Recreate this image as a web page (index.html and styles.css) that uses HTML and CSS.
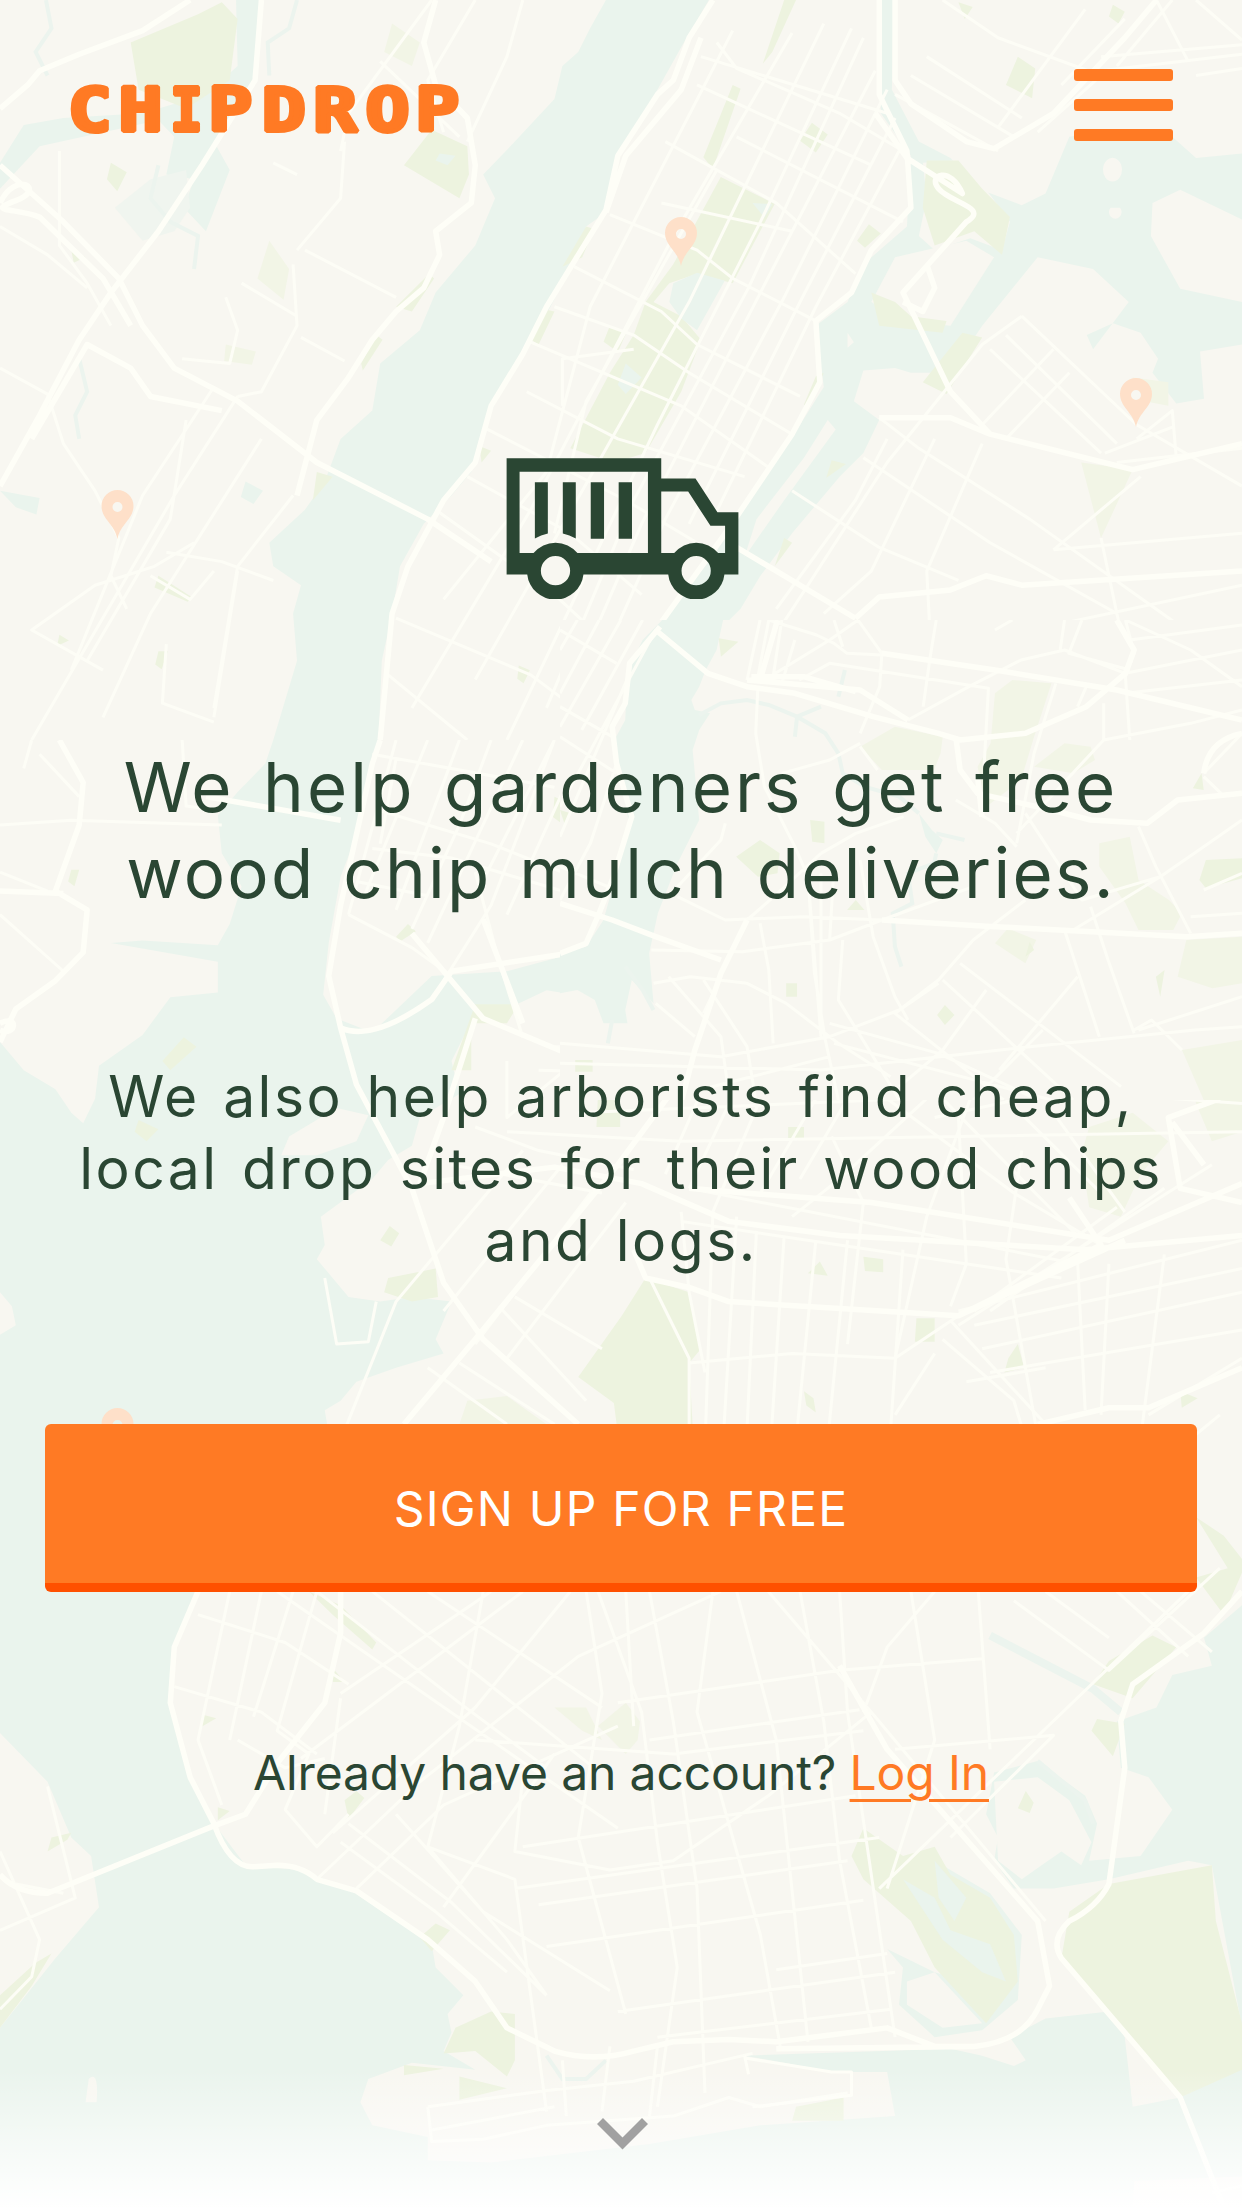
FILE: index.html
```html
<!DOCTYPE html>
<html lang="en">
<head>
<meta charset="utf-8">
<title>ChipDrop</title>
<link rel="stylesheet" href="styles.css">
</head>
<body>
<main class="hero">
  <svg class="map" viewBox="0 0 1242 2208" aria-hidden="true">
    <defs>
      <path id="pin" d="M0 47C-3 32-16 27-16 14A16 16 0 0 1 16 14C16 27 3 32 0 47ZM0 10a5 5 0 1 0 0 10a5 5 0 0 0 0-10Z"/>
      <linearGradient id="fade" x1="0" y1="0" x2="0" y2="1"><stop offset="0" stop-color="#fff" stop-opacity="0"/><stop offset="1" stop-color="#fff"/></linearGradient>
    </defs>

    <!-- north -->
    <svg x="0" y="0" width="1242" height="740" viewBox="0 0 1568 1568" preserveAspectRatio="none">
      <g class="water">
        <path d="M765 0H895L860 100L830 190L780 340L765 450L740 480L720 570L695 650L670 720L640 800L605 930L595 1000L570 1050L535 1110L505 1200L495 1300L482 1400L478 1568H345L350 1540L375 1400L370 1300L380 1240L345 1200L340 1150L385 1080L410 1020L430 930L470 870L480 770L530 700L550 620L600 520L625 420L610 370L650 300L700 210L710 140L730 110L745 60Z"/>
        <path d="M1110 0H1128L1126 190L1160 300L1200 335L1235 400L1290 435L1320 410L1350 290L1400 275L1480 290L1510 335L1568 325V465L1490 402L1455 430L1453 500L1490 612L1568 640V730L1515 745L1520 845L1485 855L1455 790L1462 760L1440 705L1405 685L1372 710L1380 740L1425 640L1380 570L1310 545L1240 690L1200 790L1150 790L1130 780L1090 785L1078 850L1110 890L1090 960L1060 1010L1000 1130L960 1220L935 1290L905 1340L890 1410L905 1440L875 1505L895 1568H785L795 1430L830 1320L900 1180L970 1000L1010 900L1040 820L1030 690L1070 640L1090 560L1145 480L1150 330L1112 240Z"/>
        <path d="M298 0H328L322 170L270 300L290 360L260 490L232 440L245 380L210 370L220 290L200 255L50 310L0 400V345L30 265L80 250L180 240L260 200L300 140Z"/>
        <path d="M310 1020l22 20l-12 28l-16-15ZM0 1040l50 15l-4 35l-26-15Z"/>
      </g>
      <path class="marsh" d="M145 440L190 380L235 360L240 440L220 490L180 510Z"/>
      <g class="land">
        <path d="M1165 345L1205 340L1240 390L1275 470L1265 530L1225 505L1180 530L1160 500L1170 420Z"/>
        <path d="M1130 545L1220 510L1255 545L1200 690L1140 680L1100 640Z"/>
        <path d="M1045 890L1055 910L990 1060L940 1180L955 1100L1015 970ZM1397 340a12 25 0 1 0 15 0a12 25 0 0 0-15 0M1402 440a8 14 0 1 0 12 0ZM1070 705l8 20l-8 12Z"/>
      </g>
      <g class="park">
        <path d="M165 90L250 30L280 5L300 40L290 170L235 230L175 190Z"/>
        <path d="M910 375L978 432L925 600L880 580L845 600L825 640L860 670L885 720L860 830L815 960L775 980L720 950L770 790L800 710L815 640L850 560Z"/>
        <path d="M545 275L590 310L592 370L580 420L510 350ZM1170 340L1210 340L1240 400L1275 460L1265 540L1230 490L1180 520L1165 440ZM1100 620L1130 640L1150 670L1195 680L1190 705L1110 690ZM1215 705L1240 715L1195 835L1165 810ZM1285 120L1307 145L1303 208L1270 180ZM1025 260l20 25l-15 38l-20-25ZM925 180l10 8l-35 170l-12-25ZM990 0h15l-30 110l-12 25ZM1097 475l15 20l-20 30l-10-15ZM1405 10l15 15l-8 25l-12-15ZM1210 5l18 10l-10 25ZM140 345l20 20l-12 40l-13-25ZM200 1220l42 45l-5 10l-42-30ZM770 690l20 18l-10 38l-18-22ZM740 480l10 5l-15 60l-25 20ZM685 655l15 5l-20 70l-10-10ZM542 580l6 10l-28 70l-20-10ZM475 710l8 10l-25 65l-2-15ZM400 1000l20 10l-25 50ZM1040 790l-20 75l-5-8l15-60ZM1050 975l18 8l-25 30ZM75 1345l12 12l-15 12ZM200 1380h12l-8 38l-8-10ZM605 945l15 10l-12 25ZM990 1140l10 10l-22 50ZM90 530l18 15l-15 12ZM655 1410l14 10l-8 28l-8-10Z"/>
      </g>
      <path class="meadow" d="M495 50L530 90L520 140L485 110ZM340 510L365 570L358 635L325 590ZM1365 980L1430 995L1390 1140ZM1430 800l45 10v50l-30-10ZM285 730l38 15l-5 28l-35-8Z"/>
      <path class="water" d="M850 600L880 578L915 595L880 700L860 675L845 640ZM790 770L810 800L790 835L780 815ZM555 325l20 5l-10 20l-15-10ZM950 430l25 3l-10 28Z"/>
      <g class="creek"><path d="M58 0L65 60L45 110L60 160M375 0L365 60L338 90L340 160M200 350L190 420L215 470L250 500L245 570M100 760L110 830L95 880L100 930"/></g>
      <g class="road">
        <path d="M925 65L745 650L690 1000L560 1270M1000 70L850 500L670 1080L520 1500M1040 50L870 640L600 1440M1075 60L960 470L830 900L640 1568M1090 80L945 610L800 1060L690 1500M1105 150L960 620L810 1110L730 1420M1120 190L990 630L840 1100L760 1400M1130 250L1010 640L870 1110M1135 320L1030 650L900 1100M905 360L740 850L700 1130M800 740L710 760L710 860"/>
        <path d="M905 90L930 145L1060 240L1140 320M885 120L1120 240M880 180L1100 350M840 300L980 430L1080 580M835 430L1000 490M930 290L1140 470M770 455L880 530L925 590L1030 680M725 565L835 660L880 730L1010 840M700 650L800 710L870 790L1000 920M670 725L860 860L970 990M665 830L780 930L940 1010M610 905L790 1060L880 1150M590 1010L720 1130L810 1260M550 1080L700 1260L790 1400M500 1310L670 1430L780 1568M490 1430L590 1568"/>
        <path d="M385 530L500 630M305 600L375 670M380 715L435 765M345 345L375 370M480 130L580 290M370 560L375 690L330 830L300 840M435 300L430 420L375 530M600 0L540 170L560 280M545 0L440 240L430 320M660 0L640 120L590 300M300 840L220 1050L40 1568M270 820L180 1050L90 1420M235 890L215 1100L110 1400M330 930L190 1300L130 1520M370 1050L300 1200L270 1500M345 1230L280 1190L210 1170M245 1150L195 1200L120 1240L40 1335L130 1420M210 1365L205 1490L270 1530M270 1210L240 1270L190 1220M300 1210L270 1520M0 480L60 540L110 610M75 320L75 520L110 600L140 690M0 780L60 835L80 940L120 1040L150 1140L140 1220L160 1290M230 760L290 770L300 700L285 630"/>
        <path d="M1190 0L1260 80L1390 160L1310 280M1370 20L1260 270M1420 40L1340 180M1480 0L1410 140M1510 0L1568 85M1460 0L1500 130M1390 120L1568 95M1390 150L1568 115M1510 160L1568 145M1130 200L1260 320M1150 160L1280 290M1170 120L1290 250"/>
        <path d="M1290 670L1435 900L1568 1030M1270 710L1410 940M1250 740L1390 960M1290 670L1240 730L1120 980L1020 1240L950 1420M1330 740L1240 900M1350 790L1270 930M1435 930L1480 870L1485 970M1395 960L1480 905M1410 980L1568 950M1110 885L1160 950L1300 1100L1568 1420M1120 930L1080 1060L980 1290M1180 930L1100 1210L1040 1300M1240 940L1170 1210L1175 1370M1090 970L1250 1150L1410 1300L1430 1450M1330 1165L1440 1010M1330 1165L1568 1130M1000 1040L1110 1160L1210 1230M960 1320L1100 1390L1260 1350L1568 1240M1390 1140L1410 1300"/>
      </g>
      <g class="highway">
        <path d="M240 0L180 65L100 115L50 150L35 180L0 230M330 0L322 170L255 350L200 490L140 620L100 720L50 880L0 1030M0 350L80 470L150 590L180 690L220 780L300 850L400 980L540 1100L620 1190M0 430C20 360 60 400 20 425S20 440 50 460L130 590L165 690M550 0L535 90L550 180L590 250L600 350L595 430L550 490L555 540L535 610L500 660L470 720L440 800L400 890L375 1050M40 930L110 730L165 780L190 840L280 870"/>
        <path d="M900 0L870 80L850 170L830 200L780 330L765 445L730 540L690 650L660 750L620 860L600 980L560 1060L515 1200L495 1300L480 1568M885 80L860 190L790 330L765 450"/>
        <path d="M1110 0L1110 200L1145 320L1150 440L1100 530L1075 620L1030 680L1035 810L1000 920L920 1120L830 1330M1130 0L1130 170L1150 220L1220 300L1255 315L1330 240L1420 80L1460 0M1105 240L1145 335L1215 410C1200 350 1170 370 1185 400S1250 440 1220 470L1140 620L1200 830L1250 920L1430 995L1568 940M1170 560L1180 610L1165 660L1140 640M1110 885L1200 885L1250 920M930 1160L1080 1310M1568 1210L1290 1240L1245 1220L1200 1250L1110 1265L1080 1310"/>
      </g>
    </svg>

    <!-- harbour -->
    <svg x="0" y="740" width="1242" height="740" viewBox="0 0 1568 1568" preserveAspectRatio="none">
      <g class="water">
        <path d="M345 0H478L470 60L455 180L430 290L415 430L408 540L425 590L470 620L545 500L640 490L750 440L780 320L775 170L785 0H895L880 80L865 170L835 230L815 420L820 490L790 480L805 550L790 570L795 620L765 600L745 545L690 530L640 570L600 580L570 680L580 750L530 800L520 860L490 890L470 930L405 1010L410 1070L400 1100L440 1180L480 1190L520 1180L570 1190L550 1270L560 1300L500 1330L450 1360L430 1400L410 1420L415 1470L380 1568H0V1260L20 1240L15 1200L0 1170V640L30 700L70 740L90 790L105 812L120 760L125 690L180 625L215 545L275 535L275 470L140 430L180 425L275 435L290 390L305 310L280 240L275 160L300 110L335 50Z"/>
      </g>
      <path class="land" d="M425 780L465 795L450 850L400 880L355 880L365 840Z"/>
      <g class="park">
        <path d="M815 1140L870 1170L885 1290L870 1320L875 1470H780L775 1405L730 1350L785 1220ZM490 1140L550 1120L553 1180L520 1190L485 1170ZM232 630L248 650L215 700L205 680ZM175 805l25 20l-15 25l-15-20ZM600 560l55 0l-15 40l-45 0L595 700l-25 0ZM515 390l10 15l-20 22l-5-10ZM700 120l25 20l-15 38l-12-15ZM740 680h10v25l-24 0v-25ZM1090 1095l25 5v28l-23-3ZM1035 1105l10 30l-25-5ZM1285 1280l8 50l-25 10l5-30ZM1157 1225h23v50h-25ZM480 1060l12-30l12 15l-10 28ZM1015 1380l12 15l3 30l-12-15ZM1490 1380l22 15l-20 20ZM755 750l28 10v60l-30 0ZM995 820h20v25h-20ZM90 275h10l-6 35l-8-10Z"/>
      </g>
      <path class="meadow" d="M1375 820L1430 790L1475 850L1440 920L1415 1010L1375 990L1365 880ZM590 1400L640 1390L690 1450H580ZM1495 650L1568 640V830L1530 850L1510 770Z"/>
      <g class="road">
        <path d="M500 0L440 370M540 0L460 330M580 0L500 360M620 0L580 180L520 400M660 0L540 430M700 0L600 330M740 0L640 370M480 150L620 220L740 300M470 230L570 250L770 350M450 300L540 330M440 370L520 440L570 500M600 280L630 470L660 630M700 0L620 350L560 510M500 40L480 220M470 30L700 100"/>
        <path d="M700 650H860M640 680L640 800L720 690L725 650M680 700L900 710M710 750L1100 680M730 790L1568 730M640 830L860 850L1568 830M900 690L840 920M940 700L870 950M960 760L900 1000M1030 760L960 960M1070 760L1010 930M600 820L680 870L800 910M570 900L760 960M1400 750L1568 770M1170 760L1060 930L1000 1010M1290 760L1180 800M1270 760L1390 960M1330 790L1420 1000M1120 760L1280 960L1390 1070M1190 760L1360 1050M1225 760L1170 1010L1130 1310M1290 870L1270 1100L1320 1568M1210 800L1220 1110L1200 1200M1050 840L1090 980L1070 1280M1410 990L1230 1210M1470 950L1250 1210M1530 900L1210 1240"/>
        <path d="M660 870L500 1190L410 1568M710 900L560 1210M750 950L600 1280M790 980L640 1310M650 1180L760 1290M630 1200L740 1400M580 1320L700 1450M540 1330L640 1450M820 1140L870 1310L870 1568M860 1000L870 1170L890 1340M900 1000L890 1500M930 1010L910 1568M955 1040L940 1568M990 1050L970 1568M1030 1060L1000 1568M1070 1060L1040 1568M1140 1080L1120 1568M870 1320L1000 1300L1130 1310L1210 1220M1210 1210L1568 1060M1230 1240L1568 1120M1240 1290L1568 1170M1250 1340L1568 1250M1220 1360L1320 1330M870 950L1360 1110M860 1020L1340 1140M1190 1270L1280 1400L1310 1568M1200 1230L1320 1450M1180 1300L1130 1430M1360 1090L1370 1420M1400 1110L1390 1430M1470 1090L1440 1480M1568 1310L1450 1430M1540 1430L1440 1568M410 1140L425 1280L465 1275L475 1190M100 120L50 30M0 180L90 170L280 180M230 0L235 140L280 150M40 0L30 60M0 280L60 320M0 370L80 490"/>
      </g>
      <g class="highway">
        <path d="M75 0L105 90L100 180L70 320L110 360L105 450L70 510L20 570L0 640M0 600c25-20 20 30 0 15M0 320L80 325M260 120L430 170M480 0L470 50L430 350L415 500L430 610Q470 640 545 550L570 490L745 445L765 400L785 250M430 610L450 730L520 950L560 1150L610 1270L730 1450M520 410L610 590L710 660M610 380L660 600M890 650L780 900L600 1270L510 1450M600 590L560 800L530 940M530 940L700 905L810 940L920 1020L1060 1050L1370 1080L1568 1050M870 950L940 960L1100 980L1400 1060L1568 940M1350 970L1390 1070L1210 1220M800 1080L815 1140L870 1160L920 1190L1210 1220L1420 1060M1310 1450L1400 1415H1450L1568 1330M1540 760L1475 800L1490 950L1568 980M1480 810L1520 900"/>
      </g>
    </svg>

    <!-- east river and newtown creek -->
    <svg x="560" y="620" width="682" height="480" viewBox="0 0 1568 1440" preserveAspectRatio="none">
      <path class="land" d="M0 0H1568V1440H0Z"/>
      <path class="water" d="M235 0H375L360 90L335 150L320 200L302 240L310 270L345 280L320 330L305 390L320 600L270 730L225 880L205 1000L215 1150L165 1080L150 1170L155 1210L100 1210L80 1140L40 1110L0 1120V1000L60 980L100 900L130 760L160 620L125 360L150 300L155 150L190 60ZM825 580L855 630L880 660L865 700L840 650Z"/>
      <path class="creek" d="M320 285L370 250L430 240L480 255L545 290L610 340L640 400L650 460L700 500L780 530L825 580M655 150L640 230M545 290L600 260M545 290L540 350M865 700L860 730L800 760L810 850L765 880L770 980L785 1040M865 640L930 660M150 1040L190 1110L215 1170M120 1200L110 1270"/>
      <path class="meadow" d="M690 380L770 320L880 350L875 400L860 450H740ZM1000 220L1040 180L1130 190L1090 350L1060 480L980 560L960 440L990 370ZM1160 370L1220 380L1230 420L1180 460L1090 440ZM1240 670L1310 650L1330 780L1400 840L1430 880L1410 930L1330 930L1300 850L1240 740ZM1030 925L1095 960L1070 1030L1000 970ZM1440 960L1568 950V1090L1500 1105L1420 1070ZM1430 1290L1568 1260V1440H1480Z"/>
      <path class="park" d="M1485 720L1568 715V775L1485 805L1470 780ZM575 600L608 605V670L580 665ZM405 710L460 660L505 700L500 760L455 770ZM520 1090H545V1130H520ZM885 1155L907 1185L885 1215L867 1185ZM1370 1070L1390 1050L1380 1130ZM680 840L700 870L660 870ZM365 55L410 65L370 110ZM1475 460L1480 510L1455 505ZM1080 965L1090 990L1070 1010ZM0 570L25 580L10 610ZM35 1320H75V1355H35Z"/>
      <path class="road" d="M40 0L0 90M90 0L0 220M140 0L0 320M190 0L50 330M220 30L0 560M0 30L130 130M0 260L120 350M0 350L130 460M160 160L0 650M130 430L70 670L0 840M0 740L110 800M460 0L430 180M480 0L455 170M510 0L490 170M540 60L510 190M470 180L620 60L685 0M480 0L590 45L630 70L660 100L740 105M630 0L650 80M685 0L740 100M740 100L735 200L690 340M865 0L850 120L835 260M550 180L620 130L985 205L975 440M800 300L940 200L1060 120L1160 90L1300 160L1568 90M1160 0L1150 90M1300 0L1320 100L1300 170L1310 360M1200 0L1170 100L1310 150M1300 0L1450 90L1568 200M1310 60L1568 15M1300 220L1568 180M1040 0L1000 30M1140 190L1090 400L1050 670M1210 200L1190 260M1250 250L1250 360L1050 640M1250 360L1450 310L1568 270M690 370L620 420L510 460M455 200L450 340L470 500L540 680L570 770L600 1250M690 380L730 450M380 610L370 660L270 800M600 700L680 640L790 590M600 700L500 820L430 900M630 740L620 960M600 760L600 1250M570 770L585 1060L610 1260L640 1440M690 720L720 950L770 1130L800 1200M650 960L640 1140L720 1310L780 1440M460 910L480 1050L490 1270M270 830L380 900L560 890L740 900M210 990L420 995L620 960L740 900L950 800M215 1090L300 1070L430 1090L520 1150L640 1270L760 1370M220 1150L310 1250M250 1070L370 1250L390 1440M330 1080L430 1280L450 1440M370 1070L330 1180M0 1270L370 1310L620 1250L780 1170L870 1080L950 960L1070 840M880 1080L1180 1440M920 1030L1290 1400M870 1090L770 1180L1020 1440M980 1110L880 1290L780 1400M1190 1070L1010 1350M1160 930L1240 1250M1220 860L1260 1020L1320 1240M1070 580L1200 840L1380 770L1480 680L1568 600M1180 930L1380 770M1330 620L1370 740L1450 940M1480 460L1568 340M1480 470L1520 520M910 540L1000 610L1050 680M1480 810L1568 760M1450 890L1568 880M1330 1230L1568 1130M1430 1290L1360 1200L1320 1230M0 1330L600 1350L1080 1280L1460 1230L1568 1220M320 1410L620 1310M630 1270L1130 1440M1110 1230L950 1440M620 1210L870 1300L1100 1440"/>
      <path class="highway" d="M230 20L160 130L150 250L120 320L130 430L165 590L120 780L90 880L60 970L0 1000M220 30L340 160L430 200L540 220L720 290L870 340L920 360L1070 340L1210 260L1300 160L1320 90L1280 0M430 180L690 210L800 300M440 170L560 170L680 215M500 0L460 180M740 100L1000 150L1280 210L1568 300M0 850L120 900L220 950L370 1020M430 900L370 1060L310 1290L280 1440M740 900L1000 920L1440 950L1568 940M910 350L920 450L960 520L1130 570L1220 600L1350 610L1420 540L1568 520M960 470L970 590M1568 340Q1490 360 1480 460"/>
    </svg>

    <!-- south -->
    <svg x="0" y="1480" width="1242" height="728" viewBox="0 0 1568 1568" preserveAspectRatio="none">
      <g class="water">
        <path d="M0 0H380L250 240L220 360L215 470L240 640L270 740L310 830L380 840L440 880L500 950L545 1000L550 1050L585 1110L565 1150L570 1190L560 1230L600 1270L520 1255L465 1290L455 1340L470 1390L540 1415L540 1465L620 1470L820 1430L960 1390L1130 1370L1120 1275L1050 1275L990 1255L940 1240L1200 1225L1240 1240L1280 1262L1295 1250L1275 1200L1320 1160L1400 1145L1420 1200L1430 1350L1490 1330L1568 1260V1568H0V1180L70 1030L125 920L115 810L90 770L60 650L0 545Z"/>
        <path d="M1568 270V1180L1530 830L1500 820L1400 860L1330 880L1280 880L1255 820L1260 770L1245 720L1255 630L1310 605L1370 680L1385 740L1375 820L1440 810L1480 710L1450 640L1415 620L1410 520L1460 490L1480 420L1530 400L1520 340Z"/>
        <path d="M1120 1010L1140 1050L1135 1130L1180 1200L1240 1185L1285 1120L1290 980L1250 890L1180 820L1210 890L1150 870L1180 970L1225 1000L1240 1090L1180 1060Z"/>
      </g>
      <g class="land"><path d="M1255 650L1310 640L1350 690L1378 780L1365 830L1340 800L1315 830L1290 860L1260 820ZM112 1290Q125 1270 122 1340H108ZM1432 1510L1568 1500V1568H1430ZM1145 1080L1180 1060L1240 1170L1190 1180L1145 1130Z"/></g>
      <g class="park">
        <path d="M1350 930L1400 870L1530 830L1535 950L1568 1170V1270L1490 1330L1340 1030ZM1075 810L1090 750L1140 810L1180 790L1200 850L1250 900L1280 980L1285 1080L1245 1170L1180 1050L1150 950L1090 860ZM620 1145L650 1150V1250L640 1285L600 1230L560 1235L575 1180ZM1455 335L1485 360L1430 470L1380 440L1400 390ZM1385 515L1420 525L1405 595L1378 540ZM65 1020L40 1090L0 1180V1110L45 1040ZM580 1285L640 1310L580 1335ZM510 1260L560 1268L510 1282ZM1005 1350L1065 1330V1380H1000ZM435 690L450 670L460 685L440 730ZM550 955L568 970L545 1015L530 985ZM390 240L430 270L475 350L470 365L420 290ZM420 405l15 30l-15 0ZM90 760L85 775L60 800L65 770ZM1295 670l10 25l-5 22l-15-10ZM255 505l18 8l-18 18ZM275 705l15 8l-15 20ZM1510 80L1545 120L1568 170V200L1545 290L1510 210L1550 190Z"/>
      </g>
      <path class="meadow" d="M700 490L740 490L760 560L735 540ZM790 480L808 520L805 560L790 590L755 530Z"/>
      <path class="water" d="M1140 860L1180 900L1200 970L1250 1000L1270 1080L1240 1060L1190 990ZM1180 820L1220 900L1205 950L1185 900Z"/>
      <g class="creek"><path class="inlet" d="M1250 335L1380 450L1415 500"/><path d="M690 1240L710 1290L740 1290L765 1250M1310 605L1370 690L1380 740"/></g>
      <g class="road">
        <path d="M250 290L360 350L440 440M220 445L330 500L400 590M300 560L360 620L410 600M290 240L250 560L280 700M330 240L290 560M370 240L320 510M400 240L350 540L390 590L360 710L400 790L440 720M350 240L780 750M400 240L580 480L690 620M470 240L750 620M540 240L760 490M620 240L430 460M660 240L380 600M720 240L600 490L420 760M740 240L760 460L730 770L790 1150M755 240L810 500L830 780L855 1050L830 1350M790 240L800 530M820 240L850 520L880 880L890 1320M900 240L880 500L960 980L985 1220M930 240L980 560L1020 1210M970 240L1110 520L1320 950M1010 240L1040 520L1060 820L1100 1180M1060 240L1070 500L1130 1200M1150 240L1180 560L1120 880M1180 240L1120 360L1090 500M1235 240L1250 580M1500 240L1110 880M1240 385L1060 410L780 480M1085 495L820 560M1090 540L850 590L600 560M1130 580L1330 550L1200 770M1080 680L660 790M1110 770L650 880M1070 820L680 915M1090 905L690 1005M1120 1020L980 1055M1130 1060L780 1145M1125 1140L830 1200M910 240L730 380L530 650L400 860M780 530L560 700L450 880M610 240L580 530L540 790L640 990L690 1110M700 590L560 920M660 640L650 800L770 840L850 820L970 680L1100 500M430 780L550 930L640 1060M440 740L570 910L690 1110M500 720L610 930L770 1100M540 790L650 860L690 1360M430 470L410 720M1280 260L1400 410L1540 190M1320 240L1400 340M1410 240L1500 380M1440 240L1530 370M540 1350L690 1315L800 1295L950 1235M545 1400L700 1350M540 1350L545 1425L610 1420L690 1390L850 1370L920 1330L960 1350L1070 1320M770 1220L760 1360M830 1220L820 1370M710 1250L715 1370M60 660L95 900L0 970M0 800L50 990L40 1070L0 1140M20 870L80 890"/>
      </g>
      <g class="highway">
        <path d="M250 240L220 360L215 480L240 640L270 740Q290 835 320 833L350 830Q380 830 400 860L450 885L540 990L600 1080L640 1180L700 1230Q750 1255 800 1230L850 1210L920 1205L980 1210L1120 1180L1180 1220H1230Q1290 1210 1310 1140L1325 1090L1310 950L1120 580L1060 400M430 240L430 330L410 480L350 610L310 720L270 745L60 890Q20 890 0 850M1568 240L1520 330L1430 440L1415 520L1420 620L1400 870Q1385 920 1350 950Q1325 990 1340 1030L1490 1330L1545 1568M980 1225L1230 1220"/>
        <path class="thin" d="M940 1240L945 1280M940 1245L1050 1275H1075V1325L950 1350M1568 1520L1530 1535"/>
      </g>
    </svg>
    <g class="pins"><use href="#pin" x="681" y="219"/><use href="#pin" x="1136" y="380"/><use href="#pin" x="117.500" y="492"/><use href="#pin" x="117.500" y="1410"/></g>
    <rect y="2070" width="1242" height="138" fill="url(#fade)"/>
  </svg>

  <header class="header">
    <a class="brand" href="#">
      <svg class="brand-mark" viewBox="0 0 410 60" role="img" aria-label="ChipDrop">
        <g class="brand-text">
          <text transform="scale(1.22 1)" y="50" x="-1 40.500">CH</text>
          <text transform="scale(.9 1)" y="50" x="112.400">I</text>
          <text transform="scale(1.22 1)" y="50" x="114.200 158 200.300 243 283.900">PDROP</text>
        </g>
      </svg>
    </a>
    <button class="menu" aria-label="Menu"><span></span><span></span><span></span></button>
  </header>

  <section class="content">
    <svg class="truck" viewBox="76 84 699 424" aria-hidden="true">
      <path fill-rule="evenodd" d="M77 85H542V146H645L711 247H774V434H732A85 85 0 0 1 563 434H308A85 85 0 0 1 139 434H77ZM116 125V370H158A85 85 0 0 1 290 370H502V125ZM542 185V370H581A85 85 0 0 1 713 370H734V288H690L623 185ZM224 379a44 44 0 1 0 0 88a44 44 0 0 0 0-88ZM647 379a44 44 0 1 0 0 88a44 44 0 0 0 0-88Z"/>
      <path d="M162 157H201V311Q180 315 162 326ZM246 157H285V326Q266 315 246 311ZM330 157H370V327H330ZM414 157H454V327H414Z"/>
    </svg>
    <h1 class="title"><span class="wide">We help gardeners get free</span><br>wood chip mulch deliveries.</h1>
    <p class="lead">We also help arborists find cheap,<br>local drop sites for their wood chips<br>and logs.</p>
    <a class="signup" href="#">SIGN UP FOR FREE</a>
    <p class="account">Already have an account? <a href="#">Log In</a></p>
    <svg class="chevron" viewBox="0 0 51 32" aria-hidden="true"><path d="M0 6L6 0L25.500 19.500L45 0L51 6L25.500 31.500Z"/></svg>
  </section>
</main>
</body>
</html>
```
FILE: styles.css
```css
* { box-sizing: border-box; }
body { margin: 0; font-family: Inter, "Liberation Sans", sans-serif; color: #2a4633; }
.hero { position: relative; height: 2208px; overflow: hidden; background: #f8f7f1; }
.map { position: absolute; inset: 0; width: 1242px; height: 2208px; }
.map path { vector-effect: non-scaling-stroke; }
.water { fill: #eaf4ed; }
.marsh { fill: #f0f5ef; }
.land { fill: #f8f7f1; }
.park { fill: #edf3df; }
.meadow { fill: #f2f5e6; }
.creek { fill: none; stroke: #ecf4ee; stroke-width: 4; }
.creek .inlet { stroke-width: 8; }
.road { fill: none; stroke: #fdfdf6; stroke-width: 3; stroke-linejoin: round; }
.highway { fill: none; stroke: #fefef7; stroke-width: 5.5; stroke-linejoin: round; }
.highway .thin { stroke-width: 3; }
.pins { fill: #fee0c9; fill-rule: evenodd; }

.header { position: relative; display: flex; justify-content: space-between; align-items: flex-start; padding: 69px 69px 0; height: 458px; }
.brand { display: block; padding-top: 12px; }
.brand-mark { display: block; width: 410px; height: 60px; overflow: visible; }
.brand-text { font: 700 60px "DejaVu Sans Mono", monospace; fill: #ff7a24; stroke: #ff7a24; stroke-width: 4; stroke-linejoin: bevel; }
.menu { display: flex; flex-direction: column; gap: 18px; padding: 0; border: 0; background: none; }
.menu span { width: 99px; height: 12px; border-radius: 3px; background: #ff7a24; }

.content { position: relative; display: flex; flex-direction: column; align-items: center; padding: 0 45px; }
.truck { width: 233px; height: 141px; margin-left: 2px; fill: #2a4633; }
.title { margin: 145px 0 0; font-size: 69px; font-weight: 400; line-height: 86px; letter-spacing: 2.3px; word-spacing: 6px; text-align: center; white-space: nowrap; }
.title .wide { letter-spacing: 3.1px; }
.lead { margin: 145px 0 0; font-size: 57px; line-height: 72px; letter-spacing: 2.45px; word-spacing: 5px; text-align: center; white-space: nowrap; }
.signup { align-self: stretch; height: 168px; margin-top: 147px; border-radius: 6px; border-bottom: 9px solid #ff5000; background: #ff7a24; color: #fff; font-size: 48px; line-height: 170px; letter-spacing: 1.2px; text-align: center; text-decoration: none; }
.account { margin: 151px 0 0; font-size: 48px; line-height: 60px; letter-spacing: -.12px; white-space: nowrap; }
.account a { color: #ff7a24; text-decoration-thickness: 3px; text-underline-offset: 9px; }
.chevron { width: 51px; height: 32px; margin: 315px 0 0 2px; fill: #a1a1a1; }
```
